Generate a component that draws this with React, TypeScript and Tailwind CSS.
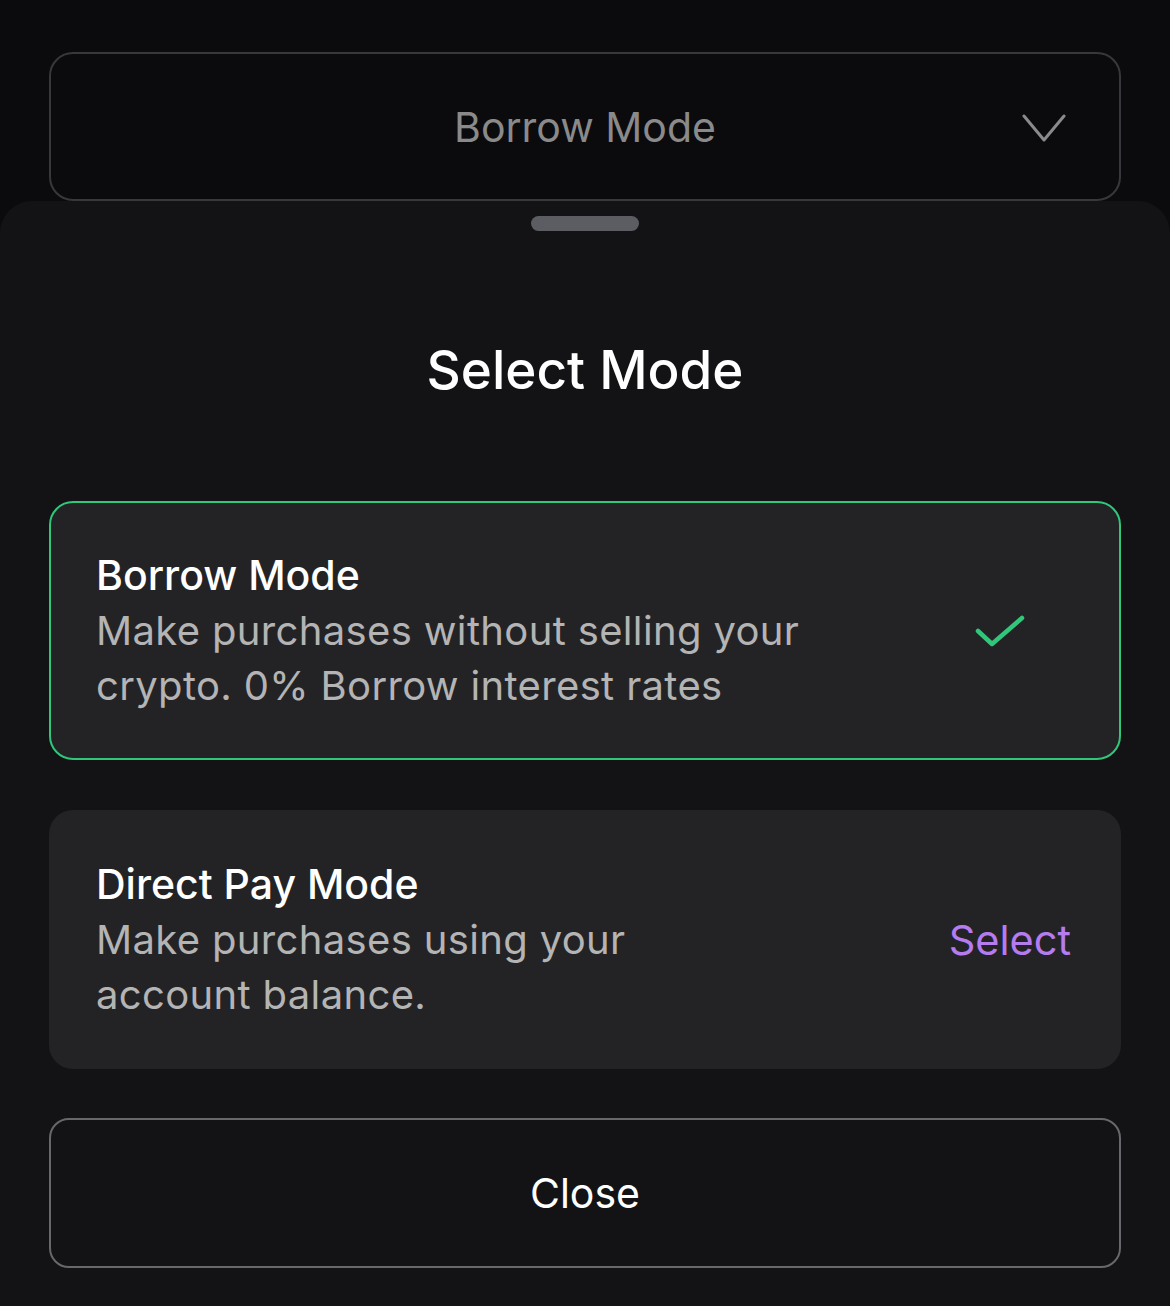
import React from "react";

export default function App() {
  const font = { fontFamily: "Inter, 'Noto Sans', sans-serif" };
  return (
    <div className="w-[1170px] h-[1306px] bg-[#0b0b0e] flex flex-col overflow-hidden" style={font}>
      <div className="px-[49px] pt-[52px]">
        <div className="relative h-[149px] rounded-[24px] border-2 border-[#38383c] flex items-center justify-center">
          <span className="text-[41px] leading-[48px] text-[#8a8a8a]">Borrow Mode</span>
          <svg className="absolute right-[52px] top-[60px]" width="46" height="30" viewBox="0 0 46 30" fill="none">
            <path d="M3 2 L23 26 L43 2" stroke="#8a8a8a" strokeWidth="3" strokeLinecap="round" strokeLinejoin="round" />
          </svg>
        </div>
      </div>
      <div className="flex-1 rounded-t-[32px] bg-[#131316] flex flex-col px-[49px]">
        <div className="mx-auto mt-[15px] h-[15px] w-[108px] rounded-full bg-[#5c5c63]" />
        <h1 className="mt-[108px] text-center text-[53px] leading-[62px] font-medium text-white">Select Mode</h1>
        <div className="mt-[100px] h-[259px] rounded-[24px] border-2 border-[#30c77a] bg-[#232326] flex items-center pl-[45px] pr-[94px]">
          <div className="flex-1">
            <div className="text-[41px] leading-[55px] font-medium text-white">Borrow Mode</div>
            <div className="text-[40px] leading-[55px] tracking-[0.35px] text-[#b4b4b4] max-w-[760px]">Make purchases without selling your crypto. 0% Borrow interest rates</div>
          </div>
          <svg width="50" height="32" viewBox="0 0 50 32" fill="none">
            <path d="M3 16 L17 29 L47 3" stroke="#30c77a" strokeWidth="4.5" strokeLinecap="round" strokeLinejoin="round" />
          </svg>
        </div>
        <div className="mt-[50px] h-[259px] rounded-[24px] bg-[#232326] flex items-center pl-[47px] pr-[50px]">
          <div className="flex-1">
            <div className="text-[41px] leading-[55px] font-medium text-white">Direct Pay Mode</div>
            <div className="text-[40px] leading-[55px] tracking-[0.35px] text-[#b4b4b4] max-w-[580px]">Make purchases using your account balance.</div>
          </div>
          <span className="text-[41.5px] leading-[48px] text-[#b57cf0]">Select</span>
        </div>
        <button className="mt-[49px] h-[150px] w-full rounded-[20px] border-2 border-[#68686c] bg-transparent flex items-center justify-center text-[41px] leading-[48px] text-white">
          Close
        </button>
      </div>
    </div>
  );
}
